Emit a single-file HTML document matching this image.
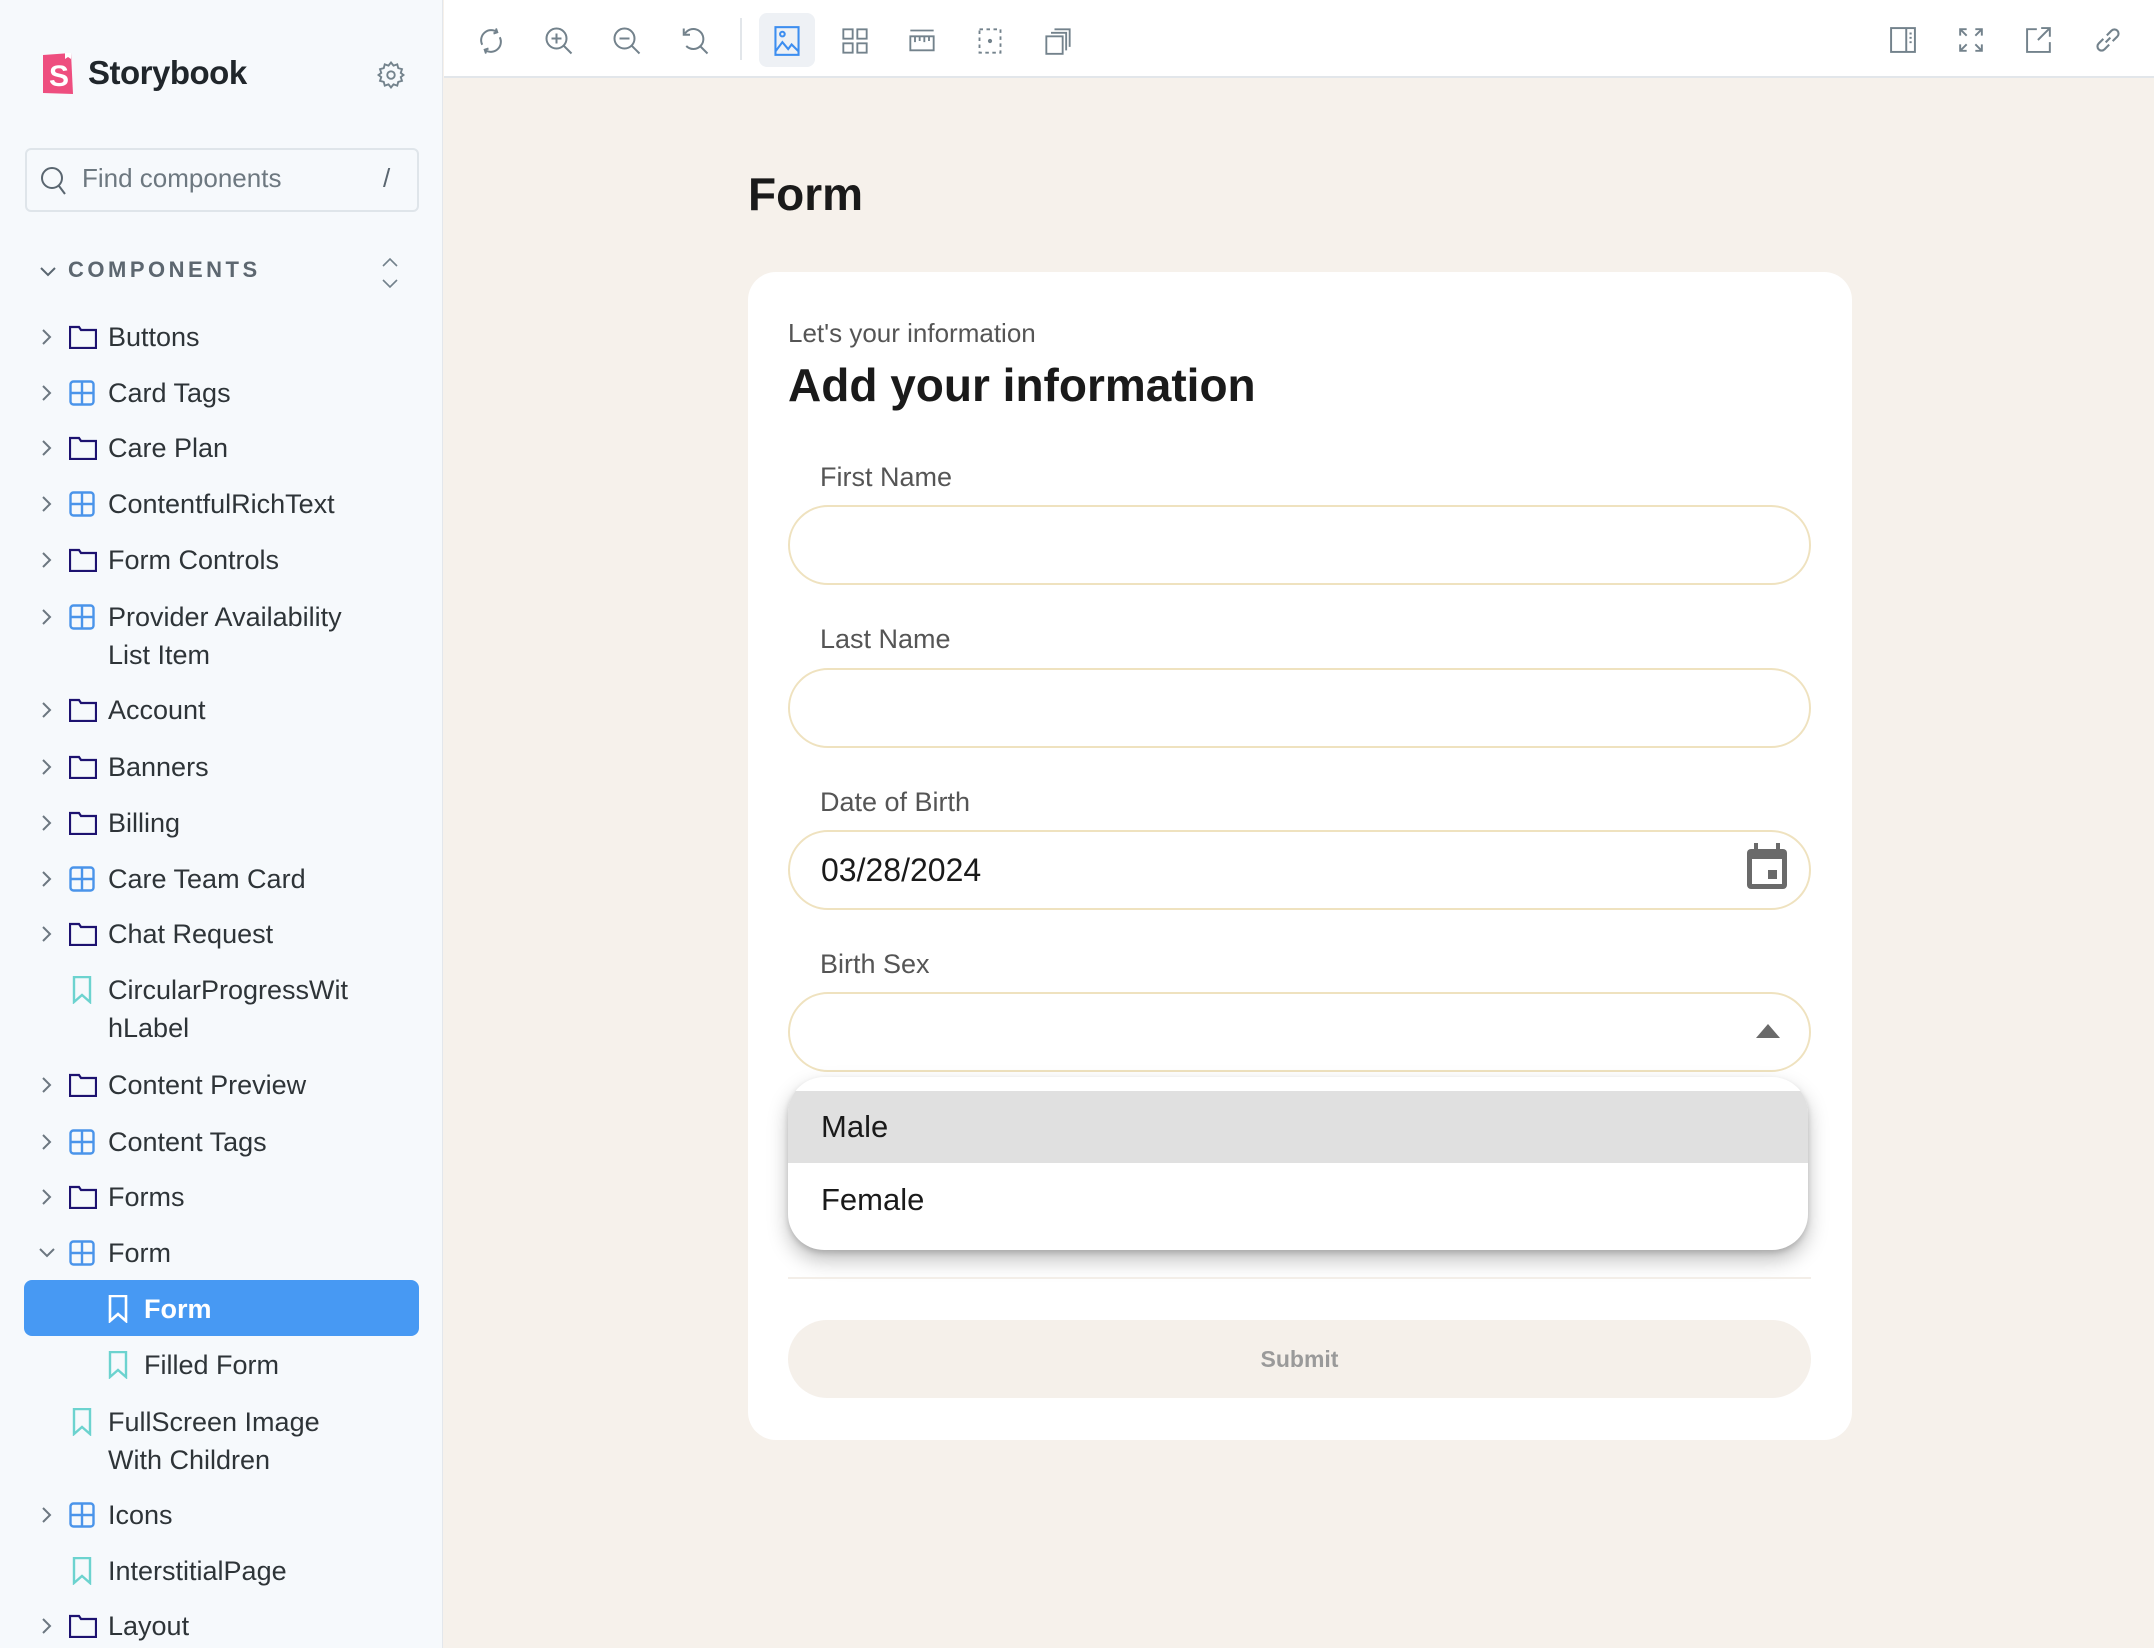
<!DOCTYPE html>
<html><head><meta charset="utf-8"><style>
*{margin:0;padding:0;box-sizing:border-box}
svg{display:block}
body{width:2154px;height:1648px;overflow:hidden;font-family:"Liberation Sans",sans-serif;background:#f6f1eb;position:relative}
#side{position:absolute;left:0;top:0;width:443px;height:1648px;background:#f6f9fc;border-right:1px solid #e3e7ec}
.row{position:absolute;left:0;width:443px;height:38px;line-height:38px;font-size:27px;color:#2e3438;white-space:nowrap}
.row .t{position:absolute;left:108px}
.row .ch{position:absolute;left:40px;top:10px;display:block}
.row .ic{position:absolute;left:69px;top:7px;display:block}
#tb{position:absolute;left:444px;top:0;right:0;height:78px;background:#fff;border-bottom:2px solid #e2e6ea}
.ti{position:absolute;top:26px}
.lab{position:absolute;left:820px;font-size:27px;color:#555}
.inp{position:absolute;left:788px;width:1023px;height:80px;border:2px solid #efe2bf;border-radius:40px;background:#fff}
</style></head><body>
<div id="side">
  <svg style="position:absolute;left:41px;top:52px" width="34" height="44" viewBox="0 0 34 44"><path d="M2 3 L30 1 L32 42 L2 41Z" fill="#ee4e7f"/><path d="M24 1 l0 6 l3-2 l3 2 l0-6z" fill="#fff"/><text x="8" y="34" font-size="30" font-weight="bold" fill="#fff" font-family="Liberation Sans">S</text></svg>
  <div style="position:absolute;left:88px;top:54px;font-size:33px;font-weight:bold;color:#20262b;letter-spacing:-0.5px">Storybook</div>
  <svg style="position:absolute;left:376px;top:60px" width="30" height="30" viewBox="0 0 24 24" fill="none" stroke="#73828c" stroke-width="1.5"><circle cx="12" cy="12" r="3"/><path d="M12 2l2 2.5 3-1 .8 3 3 .8-1 3L22 12l-2.2 1.7 1 3-3 .8-.8 3-3-1L12 22l-2-2.5-3 1-.8-3-3-.8 1-3L2 12l2.2-1.7-1-3 3-.8.8-3 3 1z"/></svg>
  <div style="position:absolute;left:25px;top:148px;width:394px;height:64px;border:2px solid #dfe5ea;border-radius:6px;background:#f6f9fc"></div>
  <svg style="position:absolute;left:40px;top:166px" width="28" height="30" viewBox="0 0 28 30" fill="none" stroke="#5a6670" stroke-width="2"><circle cx="12" cy="12" r="10"/><path d="M19 20l6 8"/></svg>
  <div style="position:absolute;left:82px;top:163px;font-size:26px;color:#6d7880">Find components</div>
  <div style="position:absolute;left:383px;top:163px;font-size:26px;color:#5a6670">/</div>
  <svg style="position:absolute;left:39px;top:264px" width="18" height="14" viewBox="0 0 18 14" fill="none" stroke="#5a6670" stroke-width="2"><path d="M2 4l7 7 7-7"/></svg>
  <div style="position:absolute;left:68px;top:257px;font-size:22px;font-weight:bold;letter-spacing:3.5px;color:#5d6770">COMPONENTS</div>
  <svg style="position:absolute;left:380px;top:256px" width="20" height="34" viewBox="0 0 20 34" fill="none" stroke="#73828c" stroke-width="1.6"><path d="M3 10l7-7 7 7M3 24l7 7 7-7"/></svg>
  <div style="position:absolute;left:24px;top:1280px;width:395px;height:56px;background:#4799f3;border-radius:8px"></div>
  <div id="tree"></div>
</div>
<div id="tb">
  <svg class="ti" style="left:32px" width="30" height="30" viewBox="0 0 24 24" fill="none" stroke="#73828c" stroke-width="1.6"><path d="M5 15a8 8 0 0 1 12-10M19 9a8 8 0 0 1-12 10M16 2l1 3-3 1M8 22l-1-3 3-1"/></svg>
  <svg class="ti" style="left:100px" width="30" height="30" viewBox="0 0 24 24" fill="none" stroke="#73828c" stroke-width="1.6"><circle cx="10" cy="10" r="8"/><path d="M16 16l6 6M10 6v8M6 10h8"/></svg>
  <svg class="ti" style="left:168px" width="30" height="30" viewBox="0 0 24 24" fill="none" stroke="#73828c" stroke-width="1.6"><circle cx="10" cy="10" r="8"/><path d="M16 16l6 6M6 10h8"/></svg>
  <svg class="ti" style="left:236px" width="30" height="30" viewBox="0 0 24 24" fill="none" stroke="#73828c" stroke-width="1.6"><path d="M4 6a8 8 0 1 1 1 10M16 16l6 6M3 2v5h5"/></svg>
  <div style="position:absolute;left:296px;top:18px;width:2px;height:42px;background:#e2e6ea"></div>
  <div style="position:absolute;left:315px;top:13px;width:56px;height:54px;background:#eef1f5;border-radius:8px"></div>
  <svg class="ti" style="left:330px" width="26" height="30" viewBox="0 0 22 26" fill="none" stroke="#3d8ef0" stroke-width="1.8"><rect x="1" y="1" width="20" height="24"/><circle cx="7" cy="7" r="2"/><path d="M1 22l6-8 5 6 3-4 6 6"/></svg>
  <svg class="ti" style="left:397px" width="28" height="30" viewBox="0 0 24 24" fill="none" stroke="#73828c" stroke-width="1.6"><rect x="2" y="2" width="8" height="8"/><rect x="14" y="2" width="8" height="8"/><rect x="2" y="14" width="8" height="8"/><rect x="14" y="14" width="8" height="8"/></svg>
  <svg class="ti" style="left:464px" width="28" height="30" viewBox="0 0 24 24" fill="none" stroke="#73828c" stroke-width="1.6"><path d="M2 3h20M2 8h20v12H2zM6 8v5M10 8v4M14 8v5M18 8v4"/></svg>
  <svg class="ti" style="left:532px" width="28" height="30" viewBox="0 0 24 24" fill="none" stroke="#73828c" stroke-width="1.6" stroke-dasharray="3 3"><rect x="3" y="2" width="18" height="20"/><circle cx="12" cy="12" r="1" stroke-dasharray="0" fill="#73828c"/></svg>
  <svg class="ti" style="left:600px" width="28" height="30" viewBox="0 0 24 24" fill="none" stroke="#73828c" stroke-width="1.6"><rect x="2" y="8" width="14" height="15"/><path d="M6 5h13v15M9 2h13v15"/></svg>
  <svg class="ti" style="left:1446px" width="26" height="28" viewBox="0 0 24 24" fill="none" stroke="#73828c" stroke-width="1.8"><rect x="1" y="1" width="22" height="22"/><path d="M15 1v22M18 6h2M18 10h2M18 14h2"/></svg>
  <svg class="ti" style="left:1514px" width="26" height="28" viewBox="0 0 24 24" fill="none" stroke="#73828c" stroke-width="1.8"><path d="M2 8V2h6M2 2l6 6M22 8V2h-6M22 2l-6 6M2 16v6h6M2 22l6-6M22 16v6h-6M22 22l-6-6"/></svg>
  <svg class="ti" style="left:1582px" width="26" height="28" viewBox="0 0 24 24" fill="none" stroke="#73828c" stroke-width="1.8"><path d="M10 2H1v21h21v-9M14 1h8v8M22 1L11 12"/></svg>
  <svg class="ti" style="left:1650px" width="28" height="28" viewBox="0 0 24 24" fill="none" stroke="#73828c" stroke-width="1.8"><path d="M10 14l4-4M8 11l-4 4a3.5 3.5 0 0 0 5 5l4-4M16 13l4-4a3.5 3.5 0 0 0-5-5l-4 4"/></svg>
</div>

<div style="position:absolute;left:748px;top:167px;font-size:46px;font-weight:bold;color:#1a1a1a">Form</div>
<div style="position:absolute;left:748px;top:272px;width:1104px;height:1168px;background:#fff;border-radius:28px"></div>
<div style="position:absolute;left:788px;top:318px;font-size:26px;color:#555">Let's your information</div>
<div style="position:absolute;left:788px;top:358px;font-size:46px;font-weight:bold;color:#1a1a1a">Add your information</div>
<div class="lab" style="top:462px">First Name</div>
<div class="inp" style="top:505px"></div>
<div class="lab" style="top:624px">Last Name</div>
<div class="inp" style="top:668px"></div>
<div class="lab" style="top:787px">Date of Birth</div>
<div class="inp" style="top:830px"></div>
<div style="position:absolute;left:821px;top:852px;font-size:32px;color:#1a1a1a">03/28/2024</div>
<svg style="position:absolute;left:1745px;top:843px" width="44" height="48" viewBox="0 0 44 48"><rect x="9" y="0" width="4" height="8" fill="#6a6a6a"/><rect x="31" y="0" width="4" height="8" fill="#6a6a6a"/><rect x="2" y="6" width="40" height="40" rx="4" fill="#6a6a6a"/><rect x="7" y="16" width="30" height="25" fill="#fff"/><rect x="23" y="27" width="9" height="9" fill="#6a6a6a"/></svg>
<div class="lab" style="top:949px">Birth Sex</div>
<div class="inp" style="top:992px"></div>
<svg style="position:absolute;left:1756px;top:1024px" width="24" height="14"><path d="M0 14L12 0L24 14Z" fill="#6a6a6a"/></svg>
<div style="position:absolute;left:788px;top:1077px;width:1020px;height:173px;background:#fff;border-radius:36px;box-shadow:0 10px 20px rgba(0,0,0,.25),0 3px 6px rgba(0,0,0,.15);overflow:hidden">
  <div style="position:absolute;left:0;top:14px;width:100%;height:72px;background:#e0e0e0"></div>
  <div style="position:absolute;left:33px;top:32px;font-size:31px;color:#1a1a1a">Male</div>
  <div style="position:absolute;left:33px;top:105px;font-size:31px;color:#1a1a1a">Female</div>
</div>
<div style="position:absolute;left:788px;top:1277px;width:1023px;height:2px;background:#f3eee8"></div>
<div style="position:absolute;left:788px;top:1320px;width:1023px;height:78px;background:#f5f0ea;border-radius:39px;text-align:center;line-height:78px;font-size:23px;font-weight:bold;color:#9a9a9a">Submit</div>

<script>
const F='<svg width="28" height="24" viewBox="0 0 28 24" fill="none" stroke="#1d1270" stroke-width="2.2"><path d="M1 2h9l2 3h15v18H1z"/></svg>';
const C='<svg width="26" height="26" viewBox="0 0 26 26" fill="none" stroke="#4a94ea" stroke-width="2.4"><rect x="1.5" y="1.5" width="23" height="23" rx="3"/><path d="M13 1.5v23M1.5 13h23"/></svg>';
const S='<svg width="20" height="28" viewBox="0 0 20 28" fill="none" stroke="#6cd3cf" stroke-width="2.4"><path d="M2 1h16v25l-8-7-8 7z"/></svg>';
const SW='<svg width="20" height="28" viewBox="0 0 20 28" fill="none" stroke="#fff" stroke-width="2.6"><path d="M2 1h16v25l-8-7-8 7z"/></svg>';
const R='<svg width="12" height="18" viewBox="0 0 12 18" fill="none" stroke="#6c7780" stroke-width="2"><path d="M3 2l7 7-7 7"/></svg>';
const D='<svg width="18" height="14" viewBox="0 0 18 14" fill="none" stroke="#6c7780" stroke-width="2"><path d="M2 3l7 7 7-7"/></svg>';
const items=[
[337,'Buttons',F,R],[393,'Card Tags',C,R],[448,'Care Plan',F,R],[504,'ContentfulRichText',C,R],[560,'Form Controls',F,R],
[617,'Provider Availability<br>List Item',C,R],[710,'Account',F,R],[767,'Banners',F,R],[823,'Billing',F,R],[879,'Care Team Card',C,R],
[934,'Chat Request',F,R],[990,'CircularProgressWit<br>hLabel',S,''],[1085,'Content Preview',F,R],[1142,'Content Tags',C,R],
[1197,'Forms',F,R],[1253,'Form',C,D],[1309,'Form',SW,'',1],[1365,'Filled Form',S,'',1],[1422,'FullScreen Image<br>With Children',S,''],
[1515,'Icons',C,R],[1571,'InterstitialPage',S,''],[1626,'Layout',F,R]];
let h='';
for(const [y,t,ic,ch,ind] of items){
 const off=ind?36:0;
 const sel=ic===SW;
 const bm=ic===S||ic===SW;
 const icTop=bm?5:(ic===F?7:6);
 h+=`<div class="row" style="top:${y-19}px"><span class="ch" style="${ch===D?'left:38px;top:12px':''}">${ch}</span><span class="ic" style="left:${(bm?72:69)+off}px;top:${icTop}px">${ic}</span><span class="t" style="left:${108+off}px;${sel?'color:#fff;font-weight:bold':''}">${t}</span></div>`;
}
document.getElementById('tree').innerHTML=h;
</script>
</body></html>
